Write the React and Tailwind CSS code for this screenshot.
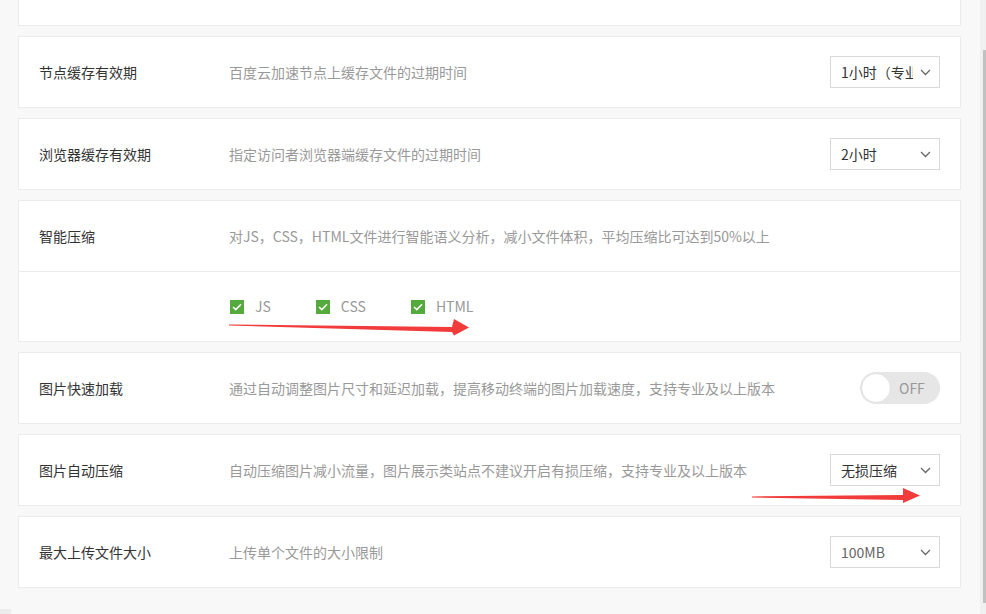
import React from "react";

const FONT = "font-['Noto_Sans_CJK_SC','Microsoft_YaHei','Noto_Sans',sans-serif]";

const Chevron = () => (
  <svg width="11" height="7" viewBox="0 0 11 7" className="shrink-0">
    <polyline points="1,1 5.5,5.5 10,1" fill="none" stroke="#666" strokeWidth="1.3" />
  </svg>
);

const Select = ({ value, muted }) => (
  <div className="w-[110px] h-[32px] border border-[#d9d9d9] bg-white flex items-center pl-[10px] pr-[8px]">
    <span className={`w-[72px] overflow-hidden whitespace-nowrap text-[14px] ${muted ? "text-[#666]" : "text-[#333]"}`}>
      {value}
    </span>
    <span className="flex-1" />
    <Chevron />
  </div>
);

const Toggle = () => (
  <div className="relative w-[80px] h-[32px] rounded-full bg-[#e6e6e6] flex items-center">
    <div className="absolute left-[1px] top-[1px] w-[30px] h-[30px] rounded-full bg-white border border-[#e0e0e0]" />
    <span className="ml-[39px] text-[14px] text-[#999]">OFF</span>
  </div>
);

const Check = ({ label }) => (
  <div className="flex items-center gap-[11px]">
    <span className="w-[14px] h-[14px] bg-[#55aa3d] flex items-center justify-center">
      <svg width="10" height="8" viewBox="0 0 10 8">
        <polyline points="1,4 3.8,6.6 9,1.2" fill="none" stroke="#fff" strokeWidth="1.5" />
      </svg>
    </span>
    <span className="text-[14px] text-[#999]">{label}</span>
  </div>
);

const Row = ({ label, desc, control }) => (
  <div className="h-[70px] flex items-center pl-[20px] pr-[20px]">
    <div className="w-[190px] text-[14px] text-[#333] shrink-0">{label}</div>
    <div className="flex-1 text-[14px] text-[#999] whitespace-nowrap">{desc}</div>
    {control}
  </div>
);

const Card = ({ children }) => (
  <div className="bg-white border border-[#ebebeb]">{children}</div>
);

export default function App() {
  return (
    <div className={`relative w-[986px] h-[614px] overflow-hidden bg-[#f8f8f8] flex ${FONT}`}>
      <div className="w-[980px] pl-[18px] pr-[19px] flex flex-col gap-[10px]">
        <div className="h-[26px] shrink-0 bg-white border border-t-0 border-[#ebebeb]" />
        <Card>
          <Row
            label="节点缓存有效期"
            desc="百度云加速节点上缓存文件的过期时间"
            control={<Select value="1小时（专业版）" />}
          />
        </Card>
        <Card>
          <Row
            label="浏览器缓存有效期"
            desc="指定访问者浏览器端缓存文件的过期时间"
            control={<Select value="2小时" />}
          />
        </Card>
        <Card>
          <Row
            label="智能压缩"
            desc="对JS，CSS，HTML文件进行智能语义分析，减小文件体积，平均压缩比可达到50%以上"
          />
          <div className="border-t border-[#ebebeb] h-[70px] flex items-center pl-[211px] gap-[45px]">
            <Check label="JS" />
            <Check label="CSS" />
            <Check label="HTML" />
          </div>
        </Card>
        <Card>
          <Row
            label="图片快速加载"
            desc="通过自动调整图片尺寸和延迟加载，提高移动终端的图片加载速度，支持专业及以上版本"
            control={<Toggle />}
          />
        </Card>
        <Card>
          <Row
            label="图片自动压缩"
            desc="自动压缩图片减小流量，图片展示类站点不建议开启有损压缩，支持专业及以上版本"
            control={<Select value="无损压缩" />}
          />
        </Card>
        <Card>
          <Row
            label="最大上传文件大小"
            desc="上传单个文件的大小限制"
            control={<Select value="100MB" muted />}
          />
        </Card>
      </div>

      {/* scrollbar strip */}
      <div className="w-[6px] bg-[#f0f0f0] pt-[50px] pb-[11px] flex justify-end">
        <div className="w-[3px] h-full bg-[#c1c1c1]" />
      </div>

      <div className="absolute left-0 bottom-[0px] w-[11px] h-[5px] bg-[#ececec]" />

      {/* red annotation arrows */}
      <svg className="absolute left-0 top-0 pointer-events-none" width="986" height="614">
        <polygon
          points="229,324.5 452,327 454,319 469,327.5 454,335.5 452,332 229,325.6"
          fill="#f23b3b"
        />
        <polygon
          points="752,496.4 903,495 903,488 920,495.5 903,503 903,500 752,497.6"
          fill="#f23b3b"
        />
      </svg>
    </div>
  );
}
